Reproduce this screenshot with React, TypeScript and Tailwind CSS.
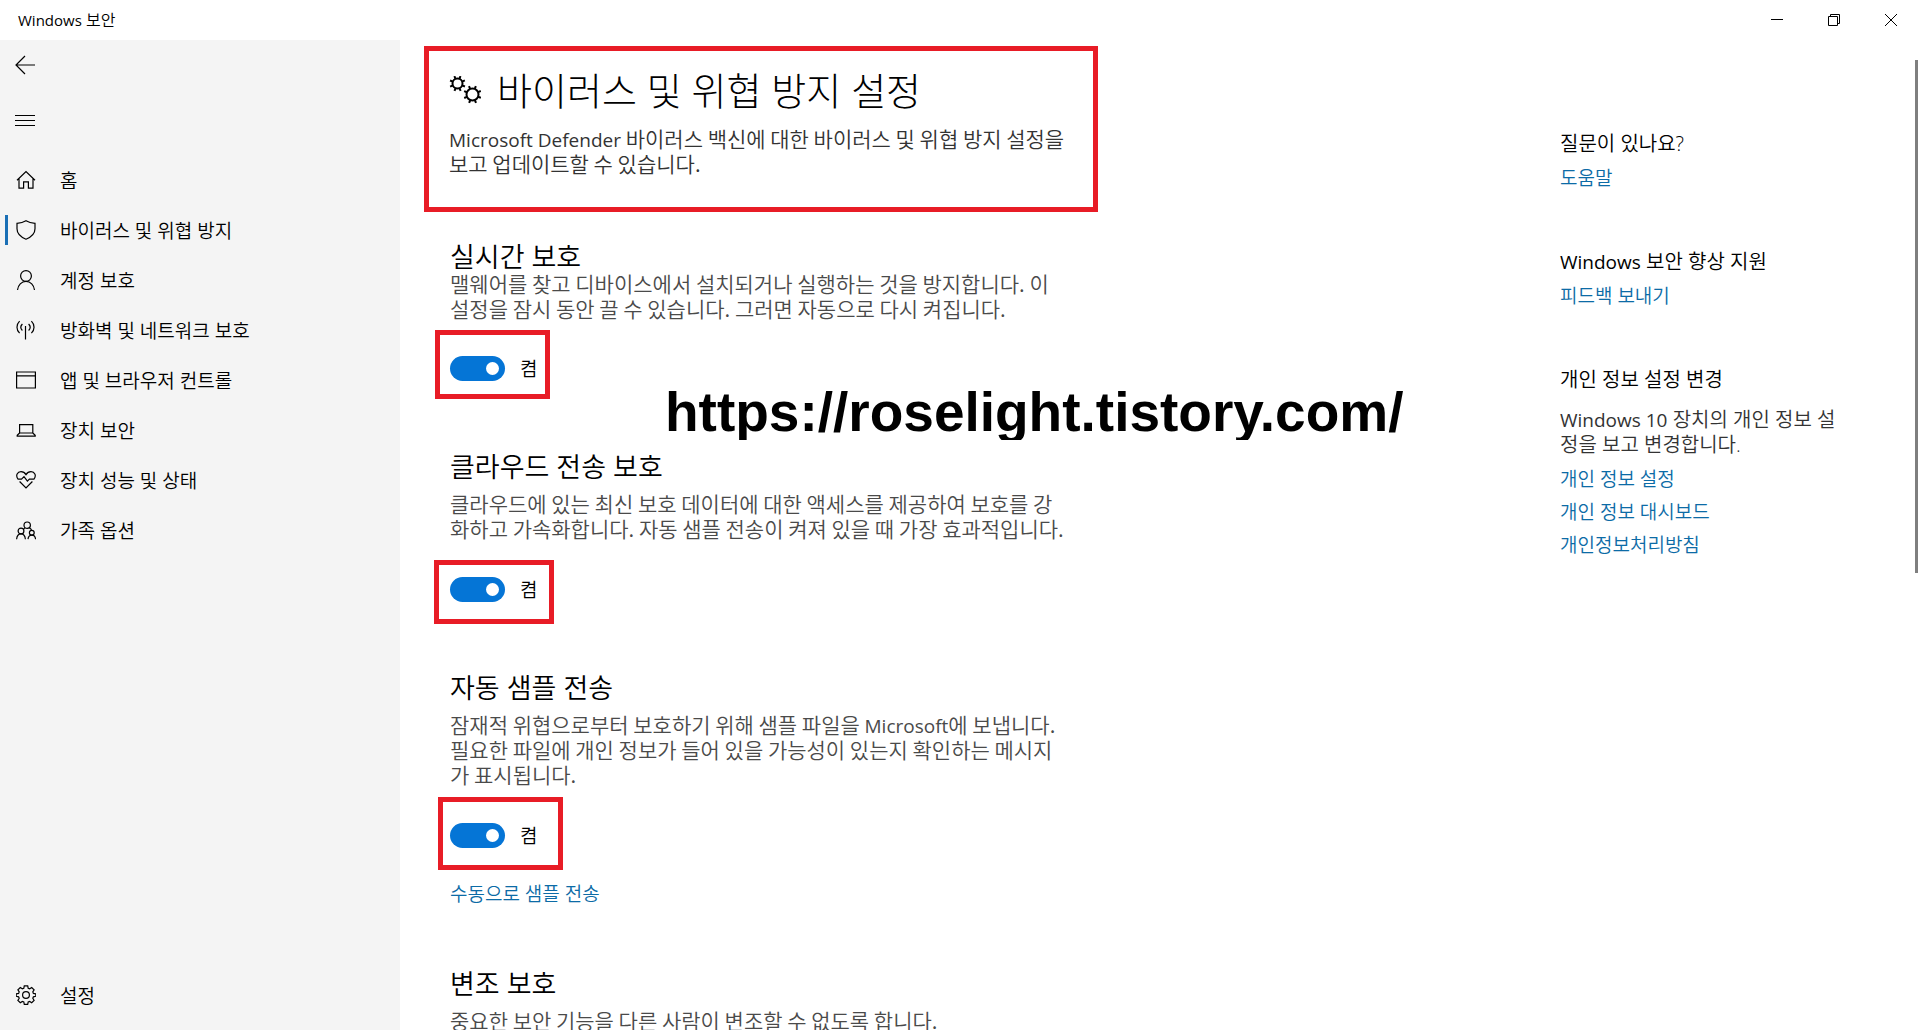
import type { ReactNode } from "react";

type NavItem = { label: string; icon: ReactNode; active?: boolean };

function Icon({ children }: { children: ReactNode }) {
  return (
    <svg viewBox="0 0 20 20" className="size-5 shrink-0" fill="none" stroke="currentColor" strokeWidth="1.2" aria-hidden="true">
      {children}
    </svg>
  );
}

const NAV_ITEMS: NavItem[] = [
  {
    label: "홈",
    icon: <path d="M1 10.2 10 1.5l9 8.7M3 8.5v9.7h4.6v-6.4h4.8v6.4H17V8.5" />,
  },
  {
    label: "바이러스 및 위협 방지",
    active: true,
    icon: <path d="M10 .8c2.6 1.7 5.5 2.4 9 2.5v5.5c0 5-4 8.4-9 10.4-5-2-9-5.4-9-10.4V3.3c3.5-.1 6.4-.8 9-2.5z" />,
  },
  {
    label: "계정 보호",
    icon: (
      <>
        <circle cx="10" cy="6" r="5.4" />
        <path d="M1.5 20c.5-5 4-8.6 8.5-8.6s8 3.6 8.5 8.6" />
      </>
    ),
  },
  {
    label: "방화벽 및 네트워크 보호",
    icon: (
      <path d="M9.5 6v13.5M3.6 1.2c-3.5 3.5-3.5 8.5 0 12M6.4 4c-2 2-2 4.5 0 6.5M12.6 4c2 2 2 4.5 0 6.5M15.4 1.2c3.5 3.5 3.5 8.5 0 12" />
    ),
  },
  {
    label: "앱 및 브라우저 컨트롤",
    icon: <path d="M.6 2h18.8v16H.6zM.6 5.8h18.8" />,
  },
  {
    label: "장치 보안",
    icon: <path d="M3.6 4.6h13.2V13H3.6zM3.6 13l-2.4 2.2v1h18v-1L16.8 13" />,
  },
  {
    label: "장치 성능 및 상태",
    icon: (
      <path d="M2 9.2C-.8 5.4 1.5 1.6 5 1.6c2.4 0 4 1.3 5 3 1-1.7 2.6-3 5-3 3.5 0 5.8 3.8 3 7.6M1.8 9.2h3.7L8 6.7l3.4 4.5 2-2h4.8M3.6 11.5 10 18l6.4-6.5" />
    ),
  },
  {
    label: "가족 옵션",
    icon: (
      <>
        <circle cx="11.2" cy="5.2" r="3.2" />
        <circle cx="5" cy="11" r="2.9" />
        <circle cx="15.8" cy="12.8" r="2.4" />
        <path d="M.6 19.2c.3-3.1 2.1-5.3 4.4-5.3s4.1 2.2 4.4 5.3M12 19.2c.3-2.3 1.7-4 3.8-4s3.5 1.7 3.8 4M13.2 7.7c1.3.6 2.1 1.4 2.4 2.7M9 7.7 7.4 9.4" />
      </>
    ),
  },
];

const COG_PATH =
  "M8.3.8h3.4l.5 2.4 1.5.6 2-1.3 2.4 2.4-1.3 2 .6 1.5 2.4.5v2.4l-2.4.5-.6 1.5 1.3 2-2.4 2.4-2-1.3-1.5.6-.5 2.4H8.3l-.5-2.4-1.5-.6-2 1.3-2.4-2.4 1.3-2-.6-1.5-2.4-.5V8.9l2.4-.5.6-1.5-1.3-2 2.4-2.4 2 1.3 1.5-.6z";

function NavButton({ label, icon, active }: NavItem) {
  return (
    <button type="button" aria-current={active ? "page" : undefined} className="flex h-[50px] w-full items-center pl-[5px] text-left text-[19px]">
      <span className={active ? "h-[30px] w-[3px] bg-[#1a6fb5]" : "h-[30px] w-[3px]"} />
      <span className="ml-2">
        <Icon>{icon}</Icon>
      </span>
      <span className="ml-6 pt-0.5">{label}</span>
    </button>
  );
}

function Gear({ cx, cy, r }: { cx: number; cy: number; r: number }) {
  return (
    <g>
      <circle cx={cx} cy={cy} r={r} />
      {[0, 45, 90, 135, 180, 225, 270, 315].map((angle) => (
        <path key={angle} d={`M${cx} ${cy - r}v-3`} transform={`rotate(${angle + 22} ${cx} ${cy})`} />
      ))}
    </g>
  );
}

function Toggle({ name, className }: { name: string; className: string }) {
  return (
    <div className={`flex items-start border-5 border-[#e81c26] ${className}`}>
      <label className="flex h-[25px] items-center gap-[15px] text-[19px]">
        <input
          type="checkbox"
          role="switch"
          aria-label={name}
          defaultChecked
          className="flex h-[25px] w-[55px] appearance-none items-center justify-start rounded-full bg-[#8a8a8a] px-1.5 before:size-[13px] before:rounded-full before:bg-white checked:justify-end checked:bg-[#0575d6]"
        />
        <span className="pt-0.5">켬</span>
      </label>
    </div>
  );
}

// Latin words run a little smaller than the Hangul around them
function Latin({ children }: { children: ReactNode }) {
  return <span className="font-['Open_Sans',sans-serif] text-[19px] leading-none font-normal">{children}</span>;
}

function Heading({ children, className }: { children: ReactNode; className: string }) {
  return <h2 className={`text-[27px] leading-[30px] text-black ${className}`}>{children}</h2>;
}

function Description({ children, className }: { children: ReactNode; className: string }) {
  return (
    <p className={`font-['Noto_Sans_CJK_KR',sans-serif] text-[21px] leading-[25px] whitespace-pre ${className}`}>
      {children}
    </p>
  );
}

function TextLink({ children, className = "" }: { children: ReactNode; className?: string }) {
  return (
    <a href="#" className={`block w-fit text-[19px] leading-[25px] text-[#0c6ba6] ${className}`}>
      {children}
    </a>
  );
}

export default function App() {
  return (
    <div className="relative flex h-screen flex-col overflow-hidden bg-white font-['Open_Sans','Noto_Sans_CJK_KR',sans-serif] font-[350] text-black">
      <header className="flex h-10 shrink-0 items-center justify-between pr-px pl-[18px]">
        <span className="text-[16px]">
          <span className="text-[15px] font-normal">Windows</span> 보안
        </span>
        <div className="flex">
          <button type="button" aria-label="최소화" className="flex h-10 w-[57px] items-center justify-center">
            <svg viewBox="0 0 12 12" className="size-3" stroke="currentColor">
              <path d="M0 5.5h12" />
            </svg>
          </button>
          <button type="button" aria-label="이전 크기로 복원" className="flex h-10 w-[57px] items-center justify-center">
            <svg viewBox="0 0 12 12" className="size-3" fill="none" stroke="currentColor">
              <path d="M.5 2.5h9v9h-9zM2.5 2.5v-2h9v9h-2" />
            </svg>
          </button>
          <button type="button" aria-label="닫기" className="flex h-10 w-[57px] items-center justify-center">
            <svg viewBox="0 0 12 12" className="size-3" stroke="currentColor">
              <path d="m0 0 12 12M12 0 0 12" />
            </svg>
          </button>
        </div>
      </header>

      <div className="flex min-h-0 flex-1">
        <nav className="flex w-[400px] shrink-0 flex-col bg-[#f4f4f4] pb-2.5">
          <button type="button" aria-label="뒤로" className="flex h-[50px] items-center pl-[15px]">
            <Icon>
              <path d="M20 10H1M10 1 1 10l9 9" />
            </Icon>
          </button>
          <button type="button" aria-label="탐색 메뉴" className="mt-[5px] mb-2.5 flex h-[50px] items-center pl-[15px]">
            <Icon>
              <path d="M0 5.5h20M0 10.5h20M0 15.5h20" strokeWidth="1" />
            </Icon>
          </button>
          {NAV_ITEMS.map((item) => (
            <NavButton key={item.label} {...item} />
          ))}
          <div className="mt-auto">
            <NavButton
              label="설정"
              icon={
                <>
                  <path d={COG_PATH} />
                  <circle cx="10" cy="10" r="3.4" />
                </>
              }
            />
          </div>
        </nav>

        <main className="flex min-w-0 flex-1 overflow-hidden">
          <div className="min-w-0 flex-1 pt-1.5 pl-[50px]">
            <section className="-ml-[26px] h-[166px] w-[674px] border-5 border-[#e81c26] pt-4 pl-5">
              <h1 className="flex h-[46px] items-center text-[38px] leading-[46px] font-light">
                <svg viewBox="0 0 32 28" className="mr-4 h-7 w-8" fill="none" stroke="currentColor" strokeWidth="2" aria-hidden="true">
                  <Gear cx={8.5} cy={7.5} r={5} />
                  <Gear cx={23.5} cy={18.5} r={6} />
                </svg>
                바이러스 및 위협 방지 설정
              </h1>
              <Description className="mt-[13px] text-[#333]">
                <Latin>Microsoft Defender</Latin>
                {" 바이러스 백신에 대한 바이러스 및 위협 방지 설정을\n보고 업데이트할 수 있습니다."}
              </Description>
            </section>

            <section>
              <Heading className="mt-[30px]">실시간 보호</Heading>
              <Description className="-mt-px text-[#4a4a4a]">
                {"맬웨어를 찾고 디바이스에서 설치되거나 실행하는 것을 방지합니다. 이\n설정을 잠시 동안 끌 수 있습니다. 그러면 자동으로 다시 켜집니다."}
              </Description>
              <Toggle name="실시간 보호" className="mt-[9px] -ml-[15px] h-[69px] w-[115px] pt-[21px] pl-2.5" />
            </section>

            <section>
              <Heading className="mt-[53px]">클라우드 전송 보호</Heading>
              <Description className="mt-[9px] text-[#4a4a4a]">
                {"클라우드에 있는 최신 보호 데이터에 대한 액세스를 제공하여 보호를 강\n화하고 가속화합니다. 자동 샘플 전송이 켜져 있을 때 가장 효과적입니다."}
              </Description>
              <Toggle name="클라우드 전송 보호" className="mt-[19px] -ml-4 h-16 w-[120px] pt-3 pl-[11px]" />
            </section>

            <section>
              <Heading className="mt-[49px]">자동 샘플 전송</Heading>
              <Description className="mt-[9px] text-[#4a4a4a]">
                {"잠재적 위협으로부터 보호하기 위해 샘플 파일을 "}
                <Latin>Microsoft</Latin>
                {"에 보냅니다.\n필요한 파일에 개인 정보가 들어 있을 가능성이 있는지 확인하는 메시지\n가 표시됩니다."}
              </Description>
              <Toggle name="자동 샘플 전송" className="mt-2.5 -ml-3 h-[73px] w-[125px] pt-[21px] pl-[7px]" />
              <TextLink className="mt-3">수동으로 샘플 전송</TextLink>
            </section>

            <section>
              <Heading className="mt-[62px]">변조 보호</Heading>
              <Description className="mt-[9px] text-[#4a4a4a]">중요한 보안 기능을 다른 사람이 변조할 수 없도록 합니다.</Description>
            </section>
          </div>

          <aside className="w-[360px] shrink-0 pt-[91px] text-[20px] leading-[25px]">
            <h3>질문이 있나요?</h3>
            <TextLink className="mt-2.5">도움말</TextLink>

            <h3 className="mt-[58px]">
              <Latin>Windows</Latin> 보안 향상 지원
            </h3>
            <TextLink className="mt-2.5">피드백 보내기</TextLink>

            <h3 className="mt-[58px]">개인 정보 설정 변경</h3>
            <p className="mt-[15px] whitespace-pre text-[#333]">
              <Latin>Windows 10</Latin>
              {" 장치의 개인 정보 설\n정을 보고 변경합니다."}
            </p>
            <TextLink className="mt-2.5">개인 정보 설정</TextLink>
            <TextLink className="mt-2">개인 정보 대시보드</TextLink>
            <TextLink className="mt-2">개인정보처리방침</TextLink>
          </aside>
        </main>
      </div>

      <div className="absolute top-[60px] right-0.5 h-[513px] w-[3px] bg-[#7f7f7f]" />
      <div className="absolute top-[382px] left-[665px] h-[58px] overflow-hidden font-['Liberation_Sans',sans-serif] text-[55px] leading-[61px] font-bold">
        https://roselight.tistory.com/
      </div>
    </div>
  );
}
